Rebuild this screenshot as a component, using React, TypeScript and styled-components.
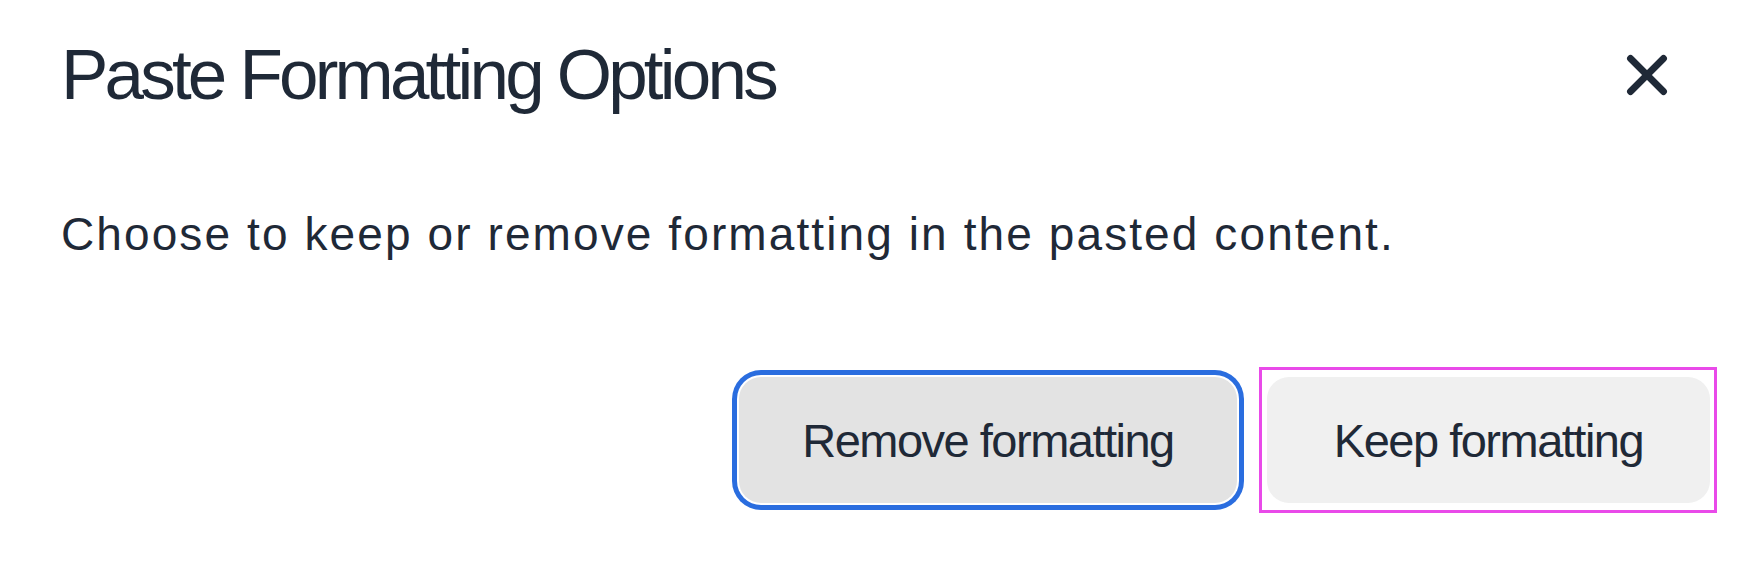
import React from "react";
import styled, { createGlobalStyle } from "styled-components";
import { X } from "lucide-react";

const Global = createGlobalStyle`
  html, body {
    margin: 0;
    padding: 0;
    background: #ffffff;
  }
  body {
    font-family: "Liberation Sans", Arial, sans-serif;
    color: #1f2937;
  }
`;

const Dialog = styled.div`
  display: flex;
  flex-direction: column;
  padding: 33px 37px 0 61px;
  box-sizing: border-box;
  width: 1754px;
  height: 562px;
`;

const Header = styled.div`
  display: flex;
  align-items: center;
  justify-content: space-between;
`;

const Title = styled.h2`
  margin: 0;
  font-size: 71px;
  font-weight: 400;
  line-height: 84px;
  letter-spacing: -3.8px;
  color: #1f2937;
`;

const CloseButton = styled.button`
  display: flex;
  align-items: center;
  justify-content: center;
  width: 66px;
  height: 66px;
  padding: 0;
  margin-right: 37px;
  border: none;
  background: transparent;
  color: #1f2937;
  cursor: pointer;
`;

const Body = styled.p`
  margin: 90px 0 0 0;
  font-size: 46px;
  line-height: 54px;
  letter-spacing: 2.1px;
  color: #1f2937;
`;

const Footer = styled.div`
  display: flex;
  justify-content: flex-end;
  align-items: center;
  gap: 22px;
  margin-top: 106px;
`;

const Button = styled.button<{ $tone: "pressed" | "plain"; $width: number; $ring?: boolean }>`
  box-sizing: border-box;
  width: ${(p) => p.$width}px;
  height: 126px;
  padding: 0;
  border: none;
  border-radius: 22px;
  background: ${(p) => (p.$tone === "pressed" ? "#e3e3e3" : "#f0f0f0")};
  color: #1f2937;
  font-family: inherit;
  font-size: 47px;
  letter-spacing: -1.5px;
  cursor: pointer;
  box-shadow: ${(p) => (p.$ring ? "0 0 0 2px #ffffff, 0 0 0 7px #2a6ddf" : "none")};
`;

const Highlight = styled.span`
  display: inline-flex;
  border: 3px solid #e94ae9;
  padding: 7px 4px 7px 5px;
`;

export default function App() {
  return (
    <>
      <Global />
      <Dialog>
        <Header>
          <Title>Paste Formatting Options</Title>
          <CloseButton aria-label="Close">
            <X size={66} strokeWidth={2.5} />
          </CloseButton>
        </Header>
        <Body>Choose to keep or remove formatting in the pasted content.</Body>
        <Footer>
          <Button $tone="pressed" $width={498} $ring>
            Remove formatting
          </Button>
          <Highlight>
            <Button $tone="plain" $width={443}>
              Keep formatting
            </Button>
          </Highlight>
        </Footer>
      </Dialog>
    </>
  );
}
